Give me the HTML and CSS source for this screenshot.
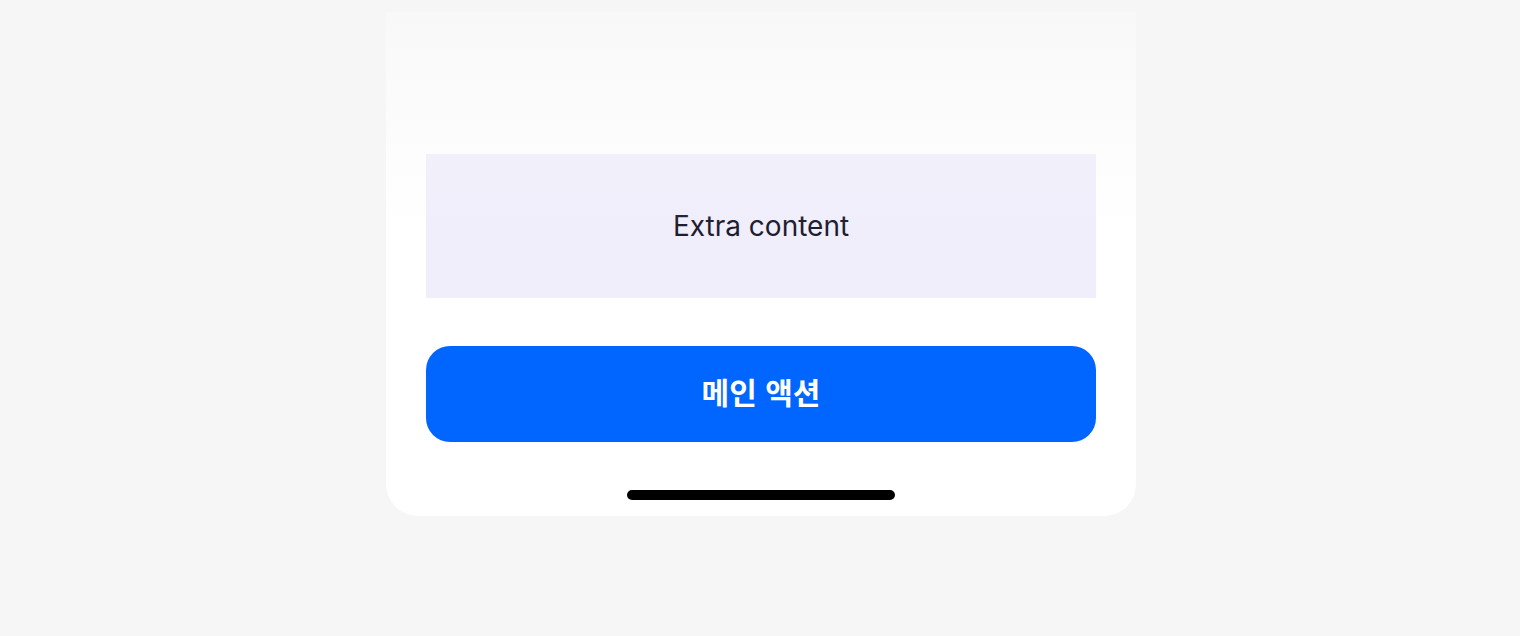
FILE: index.html
```html
<!DOCTYPE html>
<html lang="ko">
<head>
    <meta charset="UTF-8">
    <meta name="viewport" content="width=device-width, initial-scale=1.0">
    <title>메인 액션</title>
    <link rel="stylesheet" href="styles.css">
</head>
<body>
    <div class="sheet">
        <div class="fade"></div>
        <div class="extra">Extra content</div>
        <button class="main-action" type="button">메인 액션</button>
        <div class="home-indicator"></div>
    </div>
</body>
</html>
```

FILE: styles.css
```css
body {
    margin: 0;
    padding: 0 0 0 2px;
    background-color: #f6f6f6;
    font-family: Inter, "Noto Sans CJK KR", sans-serif;
}
.sheet {
    position: relative;
    width: 670px;
    margin: 12px auto 0;
    padding: 142px 40px 16px;
    background: #fff;
    border-radius: 0 0 32px 32px;
    display: flex;
    flex-direction: column;
}
.fade {
    position: absolute;
    top: 0;
    left: 0;
    right: 0;
    height: 215px;
    background: linear-gradient(rgba(246, 246, 246, 0.75), rgba(255, 255, 255, 0));
    pointer-events: none;
}
.extra {
    height: 144px;
    background-color: #f0eefb;
    color: #1e1d30;
    font-size: 28px;
    display: flex;
    align-items: center;
    justify-content: center;
}
.main-action {
    margin-top: 48px;
    height: 96px;
    padding: 0 0 7px;
    border: none;
    border-radius: 24px;
    background-color: #0066ff;
    color: #fff;
    font-family: "Noto Sans CJK KR", sans-serif;
    font-size: 30px;
    font-weight: 700;
    cursor: pointer;
}
.home-indicator {
    width: 268px;
    height: 10px;
    margin: 48px auto 0;
    background: #000;
    border-radius: 5px;
}
```
